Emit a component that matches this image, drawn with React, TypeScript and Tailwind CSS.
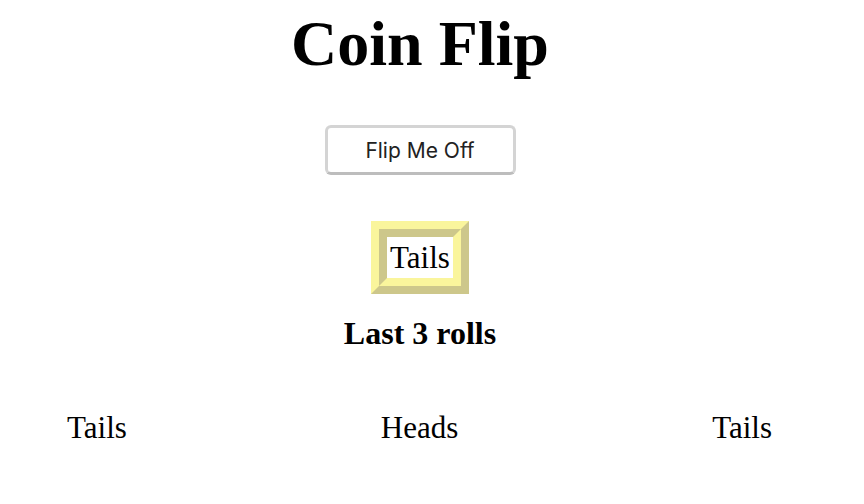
const rolls = ['Tails', 'Heads', 'Tails'];

export default function App() {
  return (
    <div className="min-h-[504px] w-[864px] bg-white text-black font-['Liberation_Serif',serif]">
      <div className="flex w-[840px] flex-col items-center text-center">
        <h1 className="mt-[7px] text-[64px] font-bold leading-[74px]">Coin Flip</h1>

        <button className="mt-[44px] h-[50px] w-[191px] rounded-[6px] border-[3px] border-[#d4d4d4] border-b-[#bdbdbd] bg-white text-[21px] leading-none text-[#222] font-['Inter',sans-serif]">
          Flip Me Off
        </button>

        {/* current result, ridge-style frame */}
        <div className="mt-[46px] border-8 border-t-[#faf59c] border-l-[#faf59c] border-b-[#cdc78b] border-r-[#cdc78b]">
          <div className="border-8 border-t-[#cdc78b] border-l-[#cdc78b] border-b-[#faf59c] border-r-[#faf59c] bg-white px-[3px] py-[3px] text-[31px] leading-[35px]">
            Tails
          </div>
        </div>

        <h3 className="mt-[21px] text-[32px] font-bold leading-[36px]">Last 3 rolls</h3>
      </div>

      <div className="mt-[60px] flex justify-between pl-[67px] pr-[92px] text-[31px] leading-[34px]">
        {rolls.map((r, i) => (
          <div key={i}>{r}</div>
        ))}
      </div>
    </div>
  );
}
